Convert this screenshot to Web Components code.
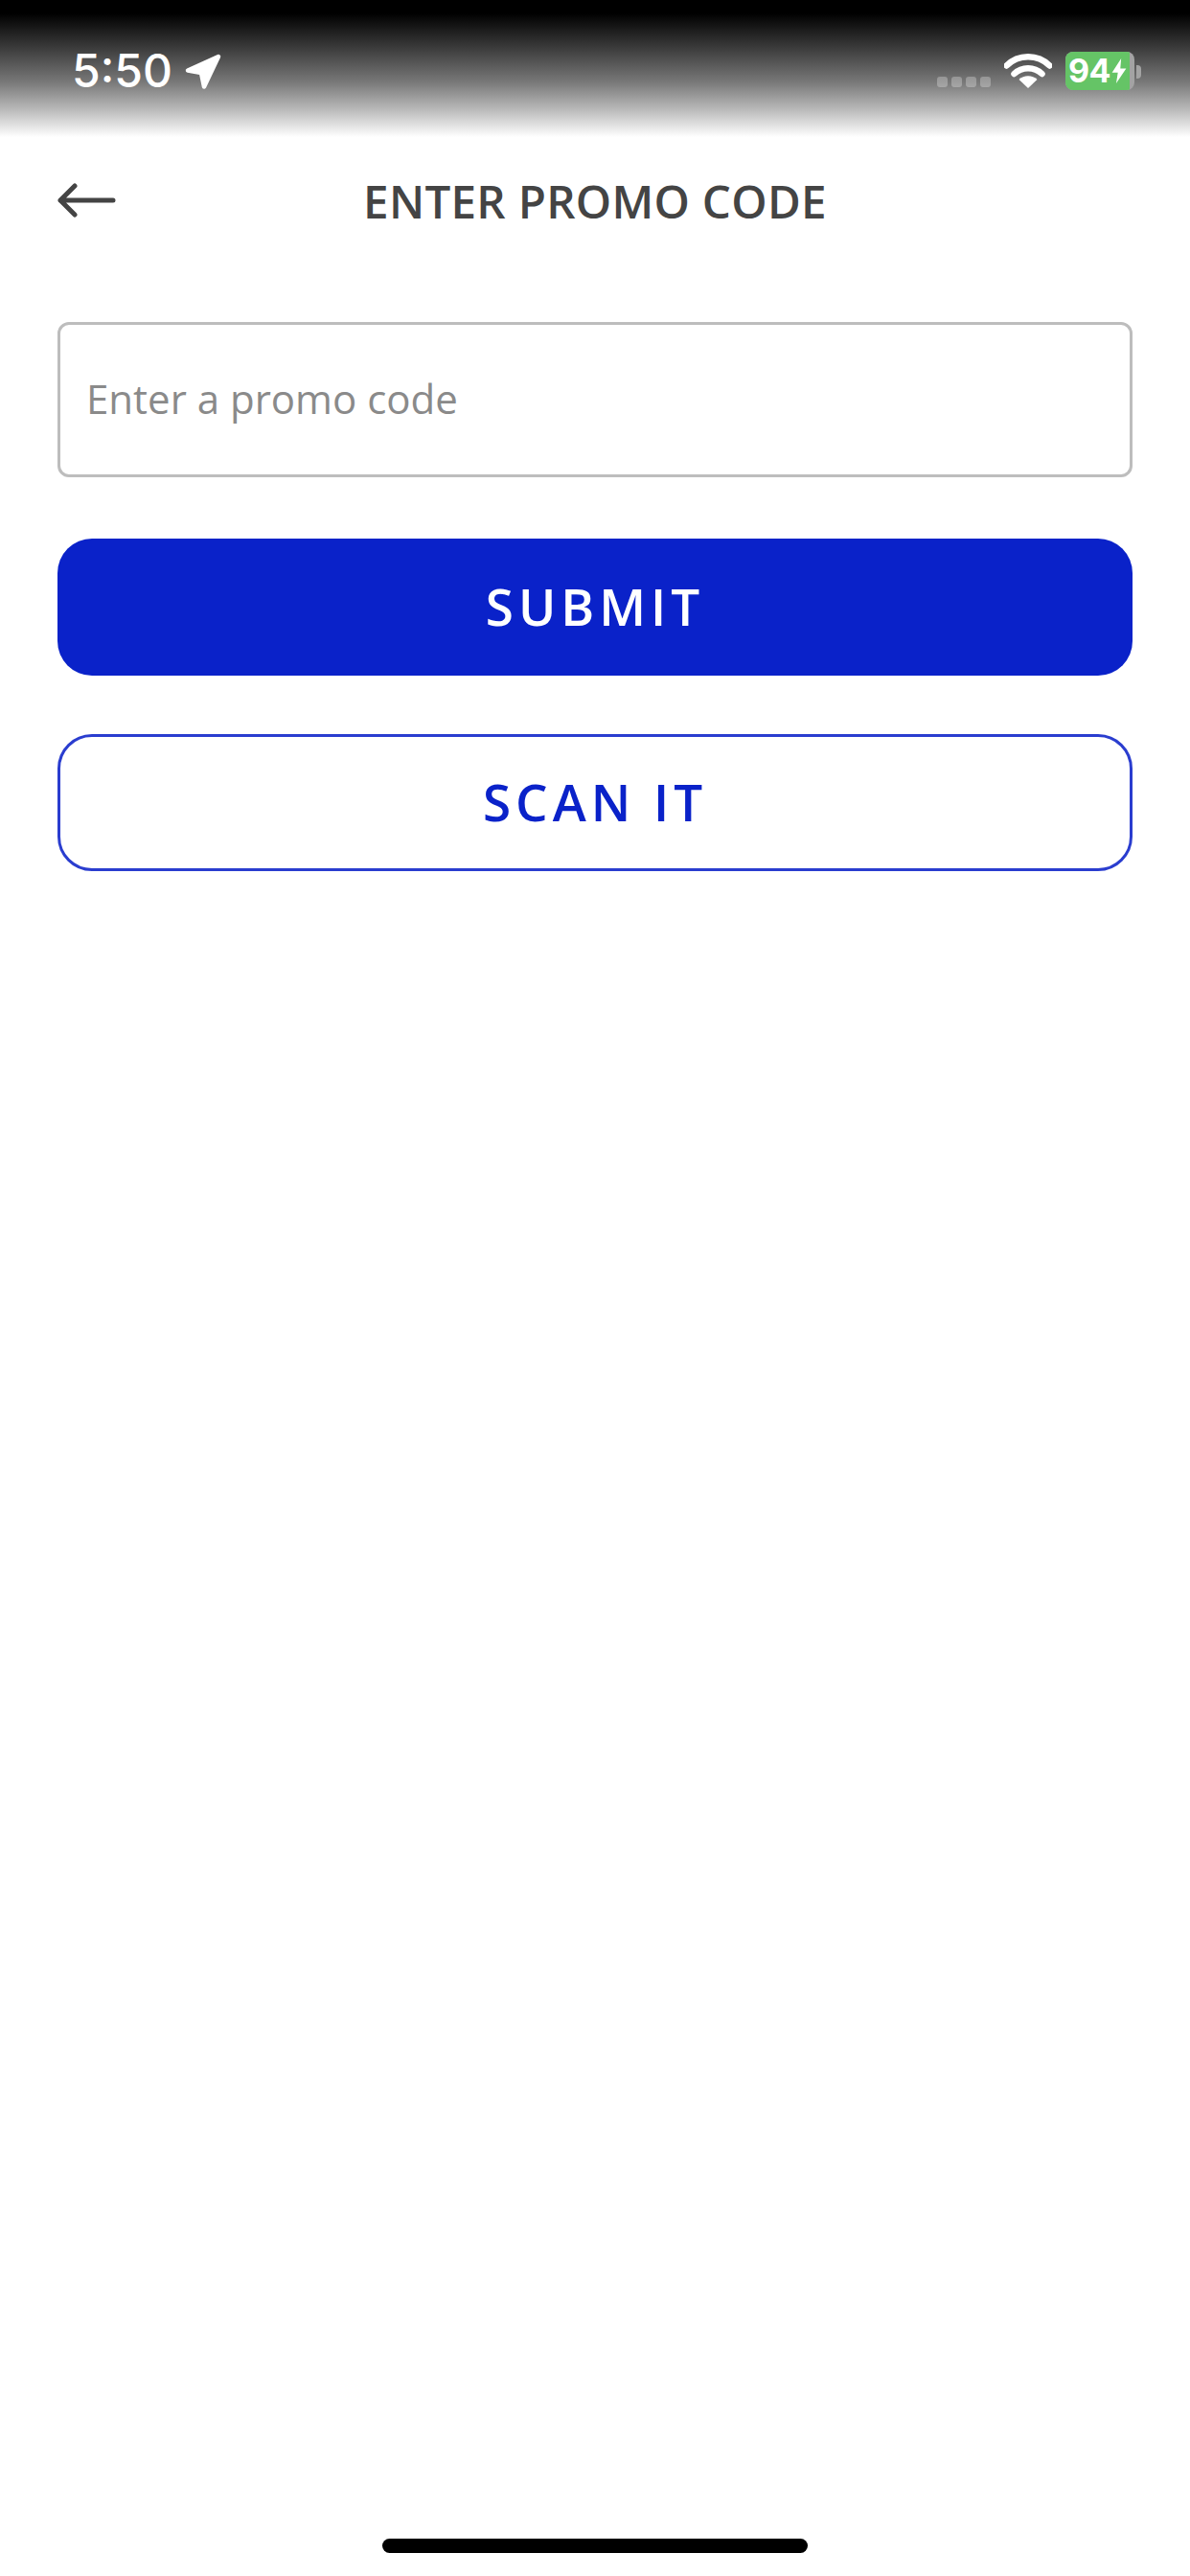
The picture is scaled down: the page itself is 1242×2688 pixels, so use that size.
<!DOCTYPE html>
<html lang="en">
<head>
<meta charset="utf-8">
<title>Enter promo code</title>
<style>
  html, body { margin: 0; padding: 0; background: #fff; }
  body { width: 1242px; height: 2688px; display: flex; flex-direction: column; font-family: "Open Sans", "Noto Sans", sans-serif; }
  .content { display: flex; flex-direction: column; padding: 0 60px; }
</style>
</head>
<body>
  <status-bar time="5:50" battery="94"></status-bar>
  <page-header>ENTER PROMO CODE</page-header>
  <div class="content">
    <promo-field>Enter a promo code</promo-field>
    <action-button variant="solid">SUBMIT</action-button>
    <action-button variant="outline">SCAN IT</action-button>
  </div>
  <home-indicator></home-indicator>

<script>
class StatusBar extends HTMLElement {
    constructor() {
        super();
        this.attachShadow({ mode: "open" });
    }

    connectedCallback() {
        const time = this.getAttribute("time");
        const battery = this.getAttribute("battery");
        this.shadowRoot.innerHTML = `
        <style>
            :host { display: flex; align-items: flex-start; flex: none; height: 143px; box-sizing: border-box;
                padding: 50px 51px 0 75px;
                background: linear-gradient(#000 0, #000 14px, #333 45px, #777 85px, #bbb 115px, #fff 143px); }
            .time { font: 500 48px/48px Inter, "Liberation Sans", sans-serif; color: #fff; letter-spacing: 0; }
            .arrow { width: 40px; height: 40px; margin: 5px 0 0 12px; }
            .right { display: flex; align-items: flex-start; margin-left: auto; }
            .dots { display: flex; gap: 4px; margin-top: 30px; }
            .dots i { width: 11px; height: 11px; border-radius: 3px; background: #fff; opacity: .28; }
            .wifi { width: 50px; height: 38px; margin: 4px 0 0 14px; }
            .battery { display: flex; width: 72px; height: 40px; margin: 4px 0 0 14px; border-radius: 8px; overflow: hidden; background: #a3a3a3; }
            .level { display: flex; align-items: center; justify-content: center; width: 67px; background: #65c466; color: #fff; font: 700 34px/40px Inter, "Liberation Sans", sans-serif; letter-spacing: -.5px; }
            .level svg { width: 16px; height: 26px; margin-left: 1px; }
            .nub { width: 5px; height: 14px; margin: 18px 0 0 2px; background: #a3a3a3; border-radius: 0 4px 4px 0; }
        </style>
        <span class="time">${time}</span>
        <svg class="arrow" viewBox="0 0 40 40"><path d="M36 4 4 18.500 18 21l3 14.500Z" fill="#fff" stroke="#fff" stroke-width="4.500" stroke-linejoin="round"/></svg>
        <div class="right">
            <div class="dots"><i></i><i></i><i></i><i></i></div>
            <svg class="wifi" viewBox="0 0 50 38">
                <path d="M2.500 14.500a32 32 0 0 1 45 0M10.500 23a21 21 0 0 1 29 0" fill="none" stroke="#fff" stroke-width="6.500" stroke-linecap="round"/>
                <path d="M25 38 15.500 29a14 14 0 0 1 19 0Z" fill="#fff"/>
            </svg>
            <div class="battery">
                <div class="level">${battery}<svg viewBox="0 0 17 30"><path d="M11 0 0 17h7l-2 13L17 12h-7Z" fill="#fff"/></svg></div>
            </div>
            <div class="nub"></div>
        </div>
        `;
    }
}
customElements.define("status-bar", StatusBar);

class PageHeader extends HTMLElement {
    constructor() {
        super();
        this.attachShadow({ mode: "open" });
    }

    connectedCallback() {
        this.shadowRoot.innerHTML = `
        <style>
            :host { display: flex; position: relative; align-items: center; justify-content: center; flex: none; box-sizing: border-box; height: 132px; padding-top: 2px; color: #444; }
            svg { position: absolute; left: 60px; top: 48px; width: 62px; height: 36px; }
            .title { font: 600 47.500px/60px "Open Sans", sans-serif; letter-spacing: .3px; }
        </style>
        <svg viewBox="0 0 62 36"><path d="M58 18H3M18 3 3 18l15 15" fill="none" stroke="#444" stroke-width="5" stroke-linecap="round" stroke-linejoin="round"/></svg>
        <span class="title"><slot></slot></span>
        `;
    }
}
customElements.define("page-header", PageHeader);

class PromoField extends HTMLElement {
    constructor() {
        super();
        this.attachShadow({ mode: "open" });
    }

    connectedCallback() {
        this.shadowRoot.innerHTML = `
        <style>
            :host { display: flex; align-items: center; box-sizing: border-box; height: 162px; margin-top: 61px; padding: 0 27px 2px;
                border: 3px solid #bdbdbd; border-radius: 12px; background: #fff;
                color: #8a8a8a; font: 400 42px/56px "Open Sans", sans-serif; }
        </style>
        <slot></slot>
        `;
    }
}
customElements.define("promo-field", PromoField);

class ActionButton extends HTMLElement {
    constructor() {
        super();
        this.attachShadow({ mode: "open" });
    }

    connectedCallback() {
        this.shadowRoot.innerHTML = `
        <style>
            :host { display: flex; align-items: center; justify-content: center; box-sizing: border-box; height: 143px; padding-bottom: 2px; border-radius: 36px;
                font: 600 53px/68px "Open Sans", sans-serif; letter-spacing: 5px; }
            :host([variant="solid"]) { margin-top: 64px; background: #0a22c9; color: #fff; }
            :host([variant="outline"]) { margin-top: 61px; border: 3px solid #2a3dcf; background: #fff; color: #0a22c9; }
        </style>
        <slot></slot>
        `;
    }
}
customElements.define("action-button", ActionButton);

class HomeIndicator extends HTMLElement {
    constructor() {
        super();
        this.attachShadow({ mode: "open" });
    }

    connectedCallback() {
        this.shadowRoot.innerHTML = `
        <style>
            :host { display: flex; justify-content: center; margin-top: auto; padding-bottom: 24px; }
            div { width: 444px; height: 15px; border-radius: 8px; background: #000; }
        </style>
        <div></div>
        `;
    }
}
customElements.define("home-indicator", HomeIndicator);
</script>
</body>
</html>
